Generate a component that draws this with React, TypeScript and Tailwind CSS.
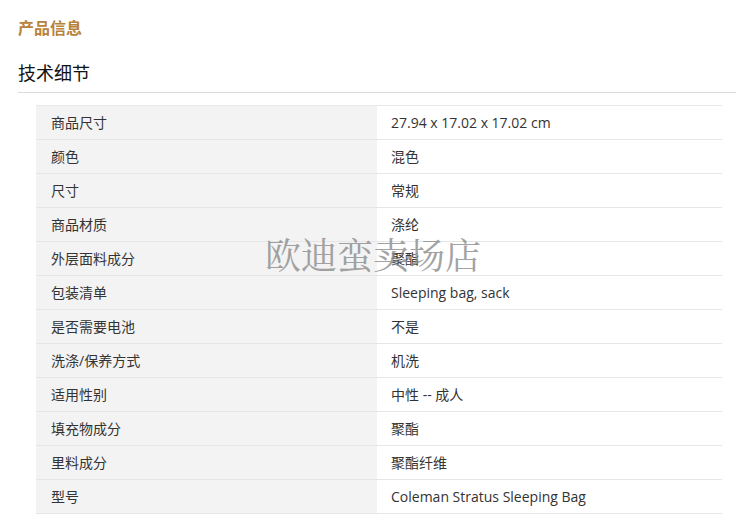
const rows: [string, string][] = [
  ["商品尺寸", "27.94 x 17.02 x 17.02 cm"],
  ["颜色", "混色"],
  ["尺寸", "常规"],
  ["商品材质", "涤纶"],
  ["外层面料成分", "聚酯"],
  ["包装清单", "Sleeping bag, sack"],
  ["是否需要电池", "不是"],
  ["洗涤/保养方式", "机洗"],
  ["适用性别", "中性 -- 成人"],
  ["填充物成分", "聚酯"],
  ["里料成分", "聚酯纤维"],
  ["型号", "Coleman Stratus Sleeping Bag"],
]

export default function App() {
  return (
    <div
      className="relative h-[515px] w-[750px] overflow-hidden bg-white"
      style={{ fontFamily: '"Open Sans", "Noto Sans CJK SC", sans-serif' }}
    >
      <div className="px-[18px] pt-[16px]">
        <h2 className="text-[16px] font-bold leading-[24px] text-[#b8823a]">产品信息</h2>
        <h3 className="mt-[20px] text-[18px] leading-[26px] text-[#111]">技术细节</h3>
        <div className="mt-[6px] mr-[-4px] h-px bg-[#dcdcdc]" />
      </div>

      {/* 规格表 */}
      <div className="mt-[12px] ml-[36px] w-[686px] border-t border-[#e8e8e8]">
        {rows.map(([k, v]) => (
          <div key={k} className="flex h-[34px] border-b border-[#e6e6e6] text-[14px] text-[#333]">
            <div className="flex w-[341px] items-center bg-[#f3f3f3] pl-[15px]">{k}</div>
            <div className="flex flex-1 items-center pl-[14px]">{v}</div>
          </div>
        ))}
      </div>

      {/* 水印 */}
      <div
        className="pointer-events-none absolute left-[265px] top-[231px] text-[36px] leading-[46px] text-[#8c8c8c] opacity-80"
        style={{ fontFamily: '"Noto Serif CJK SC", "Noto Sans CJK SC", serif' }}
      >
        欧迪蛮卖场店
      </div>
    </div>
  )
}
